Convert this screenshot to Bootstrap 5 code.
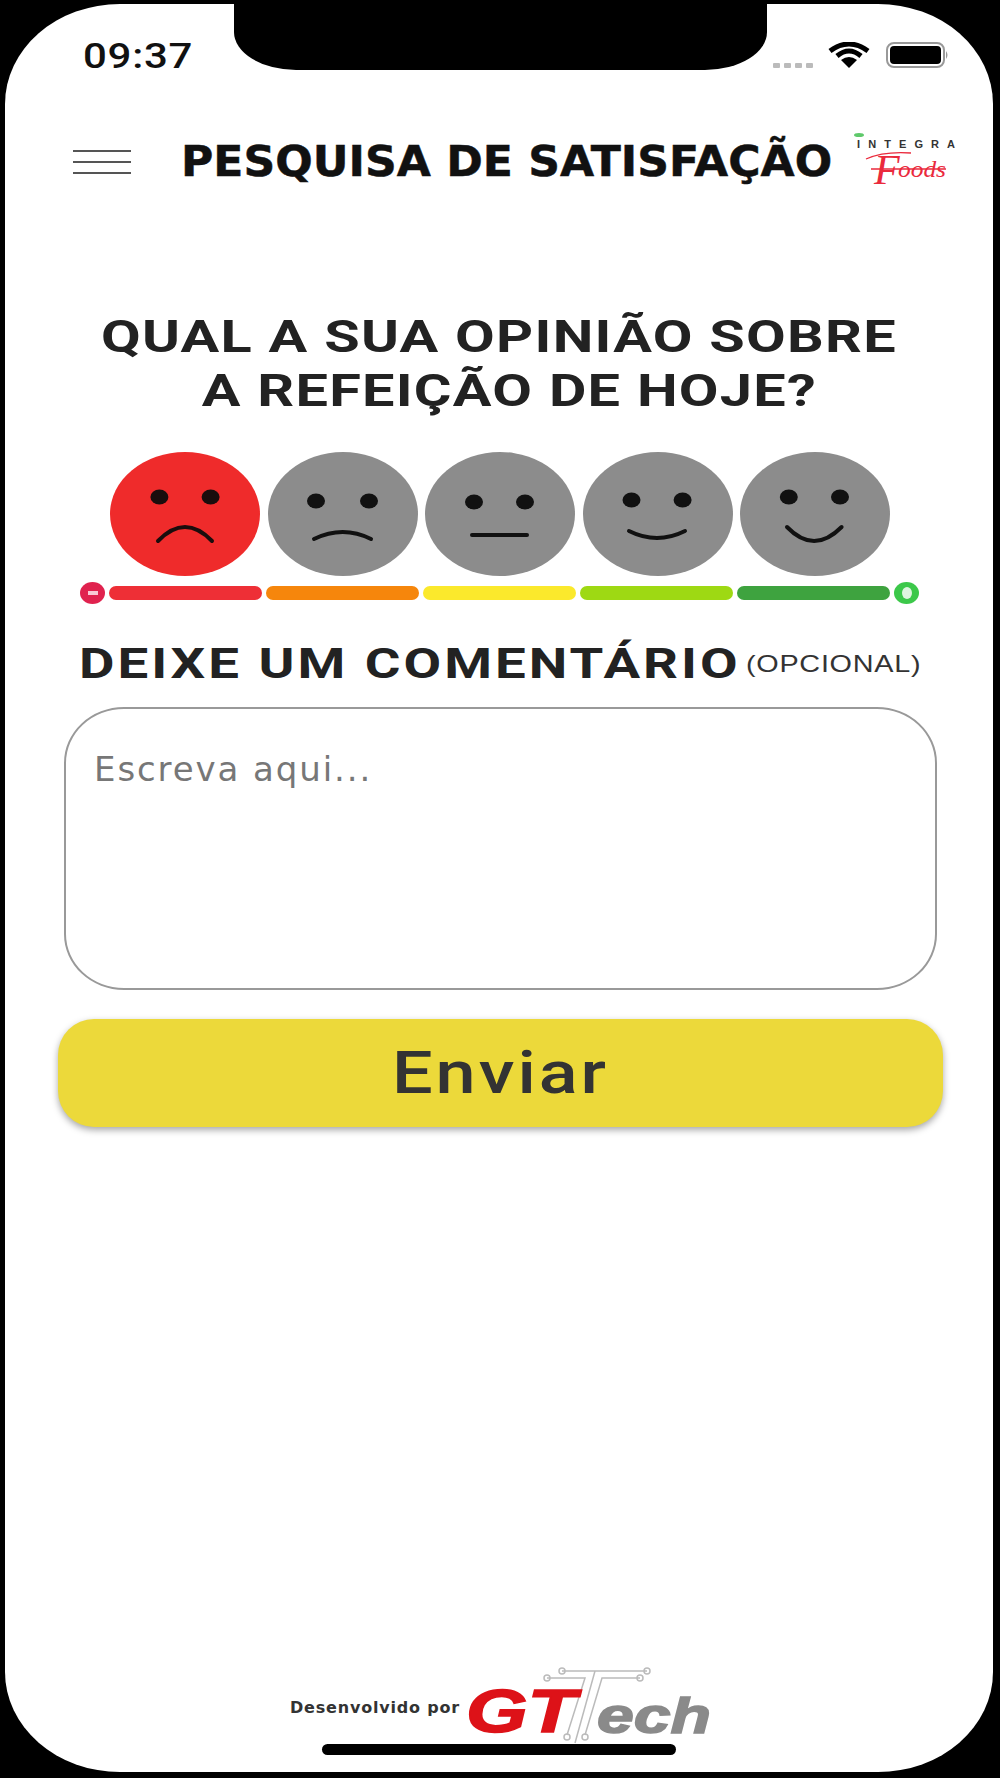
<!DOCTYPE html>
<html lang="pt-BR">
<head>
  <meta charset="UTF-8">
  <meta name="viewport" content="width=device-width, initial-scale=1.0">
  <title>Pesquisa de Satisfação</title>
  <link href="https://cdn.jsdelivr.net/npm/bootstrap@5.3.2/dist/css/bootstrap.min.css" rel="stylesheet">
  <style>
    html, body { height: 1778px; background: #000; overflow: hidden; }
    .phone-screen {
      width: 988px; height: 1768px; margin: 4px 0 0 5px;
      background: #fff; border-radius: 115px / 100px;
    }
    .phone-notch {
      top: 0; left: 229px; width: 533px; height: 66px; background: #000;
      border-radius: 0 0 62px 62px / 0 0 38px 38px;
    }
    .stretch-x { display: inline-block; transform: scaleX(1.2); white-space: nowrap; }
    .status-row { height: 70px; padding: 35px 43px 0 78px; }
    .status-time { font: 500 35px/35px Roboto, sans-serif; color: #111; transform-origin: left center; letter-spacing: .6px; }
    .status-icons { margin-top: -1px; }
    .signal-dot { width: 7px; height: 5px; background: #bbb; border-radius: 1px; }
    .signal-dots { margin: 25px 15px 0 0; gap: 4px; }
    .app-header { height: 76px; margin-top: 50px; padding: 0 20px 0 68px; }
    .menu-icon { width: 58px; gap: 9px; }
    .menu-icon span { display: block; height: 2px; background: #555; }
    .app-title {
      font: 700 42px/48px "DejaVu Sans", sans-serif; color: #111; -webkit-text-stroke: .5px #111;
      width: 652px; margin-left: 50px; transform: scaleX(1.05); transform-origin: left center; white-space: nowrap;
    }
    .integra-logo { margin: 2px 0 0 21px; }
    .question-title {
      margin: 110px 0 0; font: 700 45px/54px Roboto, sans-serif;
      color: #222; text-align: center; letter-spacing: 1px;
    }
    .question-title .stretch-x { transform: scaleX(1.28); }
    .question-title .second-line { margin-left: 20px; }
    .faces-row { gap: 7.6px; margin: 34px 0 0 105px; }
    .rating-bar { gap: 4px; margin: 6px 0 0 75px; align-items: center; }
    .bar-cap {
      width: 25px; height: 22px; border-radius: 50%; color: #fff;
      display: flex; align-items: center; justify-content: center;
    }
    .bar-segment { width: 153px; height: 14px; border-radius: 7px; }
    .comment-title { margin: 37px 0 0 74px; height: 46px; }
    .comment-main {
      font: 700 42px/46px Roboto, sans-serif; color: #222; width: 667px;
      transform: scaleX(1.3); transform-origin: left center; letter-spacing: 2.3px;
    }
    .comment-extra {
      font: 400 24px/46px "Liberation Sans", sans-serif; color: #333;
      transform-origin: left center; letter-spacing: .6px;
    }
    .comment-box {
      display: block; width: 873px; height: 283px; margin: 20px 0 0 59px; padding: 40px 28px;
      border: 2px solid #999; border-radius: 60px / 56px; resize: none; outline: 0;
      font: 400 34px/40px "DejaVu Sans", sans-serif;
    }
    .comment-box::placeholder { color: #777; opacity: 1; letter-spacing: 1.9px; }
    .send-btn {
      display: block; width: 885px; height: 108px; margin: 29px 0 0 53px; padding: 0;
      background: #ecd93a; border: 0; border-radius: 36px;
      box-shadow: 0 3px 7px rgba(0,0,0,.35); color: #333;
      font: 500 60px/108px Roboto, sans-serif; letter-spacing: 2.5px;
    }
    .app-footer { margin-top: auto; padding-left: 285px; height: 90px; }
    .footer-text { font: 700 16px/20px "DejaVu Sans", sans-serif; color: #333; width: 175px; white-space: nowrap; margin-top: 38px; letter-spacing: .8px; }
    .home-bar { width: 354px; height: 11px; background: #000; border-radius: 6px; margin: -6px auto 17px; }
  </style>
</head>
<body class="m-0">
  <div class="phone-screen position-relative d-flex flex-column">
    <div class="phone-notch position-absolute"></div>

    <!-- status bar -->
    <div class="status-row d-flex align-items-start justify-content-between">
      <span class="status-time stretch-x">09:37</span>
      <div class="status-icons d-flex align-items-start">
        <div class="signal-dots d-flex">
          <i class="signal-dot"></i><i class="signal-dot"></i><i class="signal-dot"></i><i class="signal-dot"></i>
        </div>
        <svg width="42" height="26" viewBox="0 0 42 26" class="mt-1 me-3">
          <path d="M2 9 Q21 -5 40 9 M9 14 Q21 4 33 14" fill="none" stroke="#000" stroke-width="5"/>
          <path d="M21 26 L13 18 Q21 12 29 18 Z" fill="#000"/>
        </svg>
        <svg width="64" height="26" viewBox="0 0 64 26" class="mt-1">
          <rect x="1" y="1" width="57" height="24" rx="7" fill="none" stroke="#999" stroke-width="2"/>
          <rect x="4" y="4" width="51" height="18" rx="4" fill="#000"/>
          <path d="M60 9 q3 4 0 8 z" fill="#999"/>
        </svg>
      </div>
    </div>

    <!-- header -->
    <div class="app-header d-flex align-items-center">
      <div class="menu-icon d-flex flex-column flex-shrink-0"><span></span><span></span><span></span></div>
      <div class="app-title flex-shrink-0">PESQUISA DE SATISFAÇÃO</div>
      <svg width="104" height="62" viewBox="0 0 104 62" class="integra-logo flex-shrink-0">
        <ellipse cx="5" cy="3" rx="5" ry="2" fill="#5fc96b"/>
        <text x="3" y="16" font-family="Liberation Sans, sans-serif" font-weight="700" font-size="11" fill="#333" textLength="98">INTEGRA</text>
        <text x="20" y="52" font-family="Liberation Serif, serif" font-style="italic" font-size="42" fill="#ea2a3d">F</text>
        <text x="44" y="45" font-family="Liberation Serif, serif" font-style="italic" font-size="24" fill="#ea2a3d" textLength="48" lengthAdjust="spacingAndGlyphs">oods</text>
        <path d="M12 27 Q30 19 57 21 M17 37 H92" fill="none" stroke="#ea2a3d" stroke-width="1.300"/>
      </svg>
    </div>

    <!-- question -->
    <h1 class="question-title"><span class="stretch-x">QUAL A SUA OPINIÃO SOBRE</span><br><span class="stretch-x second-line">A REFEIÇÃO DE HOJE?</span></h1>

    <div class="faces-row d-flex">
      <svg width="150" height="124" viewBox="0 0 150 124"><ellipse cx="75" cy="62" rx="75" ry="62" fill="#ef2b2b"/><ellipse cx="49.400" cy="45" rx="9" ry="7.500" fill="#1a0d0d"/><ellipse cx="100.600" cy="45" rx="9" ry="7.500" fill="#1a0d0d"/><path d="M48 89 Q75 61 102 89" fill="none" stroke="#1a0d0d" stroke-width="4" stroke-linecap="round"/></svg>
      <svg width="150" height="124" viewBox="0 0 150 124"><ellipse cx="75" cy="62" rx="75" ry="62" fill="#8c8c8c"/><ellipse cx="48" cy="49" rx="9" ry="7.500" fill="#111"/><ellipse cx="101" cy="49" rx="9" ry="7.500" fill="#111"/><path d="M46 87 Q75 73 103 87" fill="none" stroke="#111" stroke-width="4" stroke-linecap="round"/></svg>
      <svg width="150" height="124" viewBox="0 0 150 124"><ellipse cx="75" cy="62" rx="75" ry="62" fill="#8c8c8c"/><ellipse cx="49" cy="50" rx="9" ry="7.500" fill="#111"/><ellipse cx="100" cy="50" rx="9" ry="7.500" fill="#111"/><path d="M47 83 H102" fill="none" stroke="#111" stroke-width="4" stroke-linecap="round"/></svg>
      <svg width="150" height="124" viewBox="0 0 150 124"><ellipse cx="75" cy="62" rx="75" ry="62" fill="#8c8c8c"/><ellipse cx="48.500" cy="48" rx="9" ry="7.500" fill="#111"/><ellipse cx="99.600" cy="48" rx="9" ry="7.500" fill="#111"/><path d="M46 79 Q74 93 102 79" fill="none" stroke="#111" stroke-width="4" stroke-linecap="round"/></svg>
      <svg width="150" height="124" viewBox="0 0 150 124"><ellipse cx="75" cy="62" rx="75" ry="62" fill="#8c8c8c"/><ellipse cx="48.800" cy="45" rx="9" ry="7.500" fill="#111"/><ellipse cx="100" cy="45" rx="9" ry="7.500" fill="#111"/><path d="M47 75 Q74 103 101.600 75" fill="none" stroke="#111" stroke-width="4" stroke-linecap="round"/></svg>
    </div>

    <div class="rating-bar d-flex">
      <div class="bar-cap" style="background:#e0224e"><svg width="10" height="4"><rect width="10" height="4" fill="#f8c8d4"/></svg></div>
      <div class="bar-segment" style="background:#ee2f36"></div>
      <div class="bar-segment" style="background:#f6860c"></div>
      <div class="bar-segment" style="background:#fbe92c"></div>
      <div class="bar-segment" style="background:#9ed913"></div>
      <div class="bar-segment" style="background:#3ea33f"></div>
      <div class="bar-cap" style="background:#3cc84a"><svg width="10" height="12"><ellipse cx="5" cy="6" rx="5" ry="6" fill="#dff5e0"/></svg></div>
    </div>

    <div class="comment-title d-flex">
      <span class="comment-main stretch-x">DEIXE UM COMENTÁRIO</span>
      <span class="comment-extra stretch-x">(OPCIONAL)</span>
    </div>

    <textarea class="comment-box" placeholder="Escreva aqui..."></textarea>
    <button type="button" class="send-btn"><span class="stretch-x">Enviar</span></button>

    <!-- footer -->
    <div class="app-footer d-flex">
      <div class="footer-text">Desenvolvido por</div>
      <svg width="255" height="90" viewBox="0 0 255 90">
        <g fill="none" stroke="#bbb" stroke-width="1.500">
          <path d="M97 11 H182 M82 18 H120 L102 75 M175 18 H137 L120 75 M130 11 L110 83"/>
          <circle cx="97" cy="11" r="3"/><circle cx="182" cy="11" r="3"/><circle cx="82" cy="18" r="3"/><circle cx="175" cy="18" r="3"/><circle cx="102" cy="77" r="3"/><circle cx="120" cy="77" r="3"/>
        </g>
        <text x="1" y="72" font-family="Liberation Sans, sans-serif" font-weight="700" font-style="italic" font-size="61" fill="#dd1218" stroke="#dd1218" stroke-width="1.500" textLength="110" lengthAdjust="spacingAndGlyphs">GT</text>
        <text x="132" y="73" font-family="Liberation Sans, sans-serif" font-weight="700" font-style="italic" font-size="50" fill="#8a8a8a" stroke="#8a8a8a" stroke-width="1.500" textLength="114" lengthAdjust="spacingAndGlyphs">ech</text>
      </svg>
    </div>
    <div class="home-bar"></div>
  </div>
  <script src="https://cdn.jsdelivr.net/npm/bootstrap@5.3.2/dist/js/bootstrap.bundle.min.js"></script>
</body>
</html>
